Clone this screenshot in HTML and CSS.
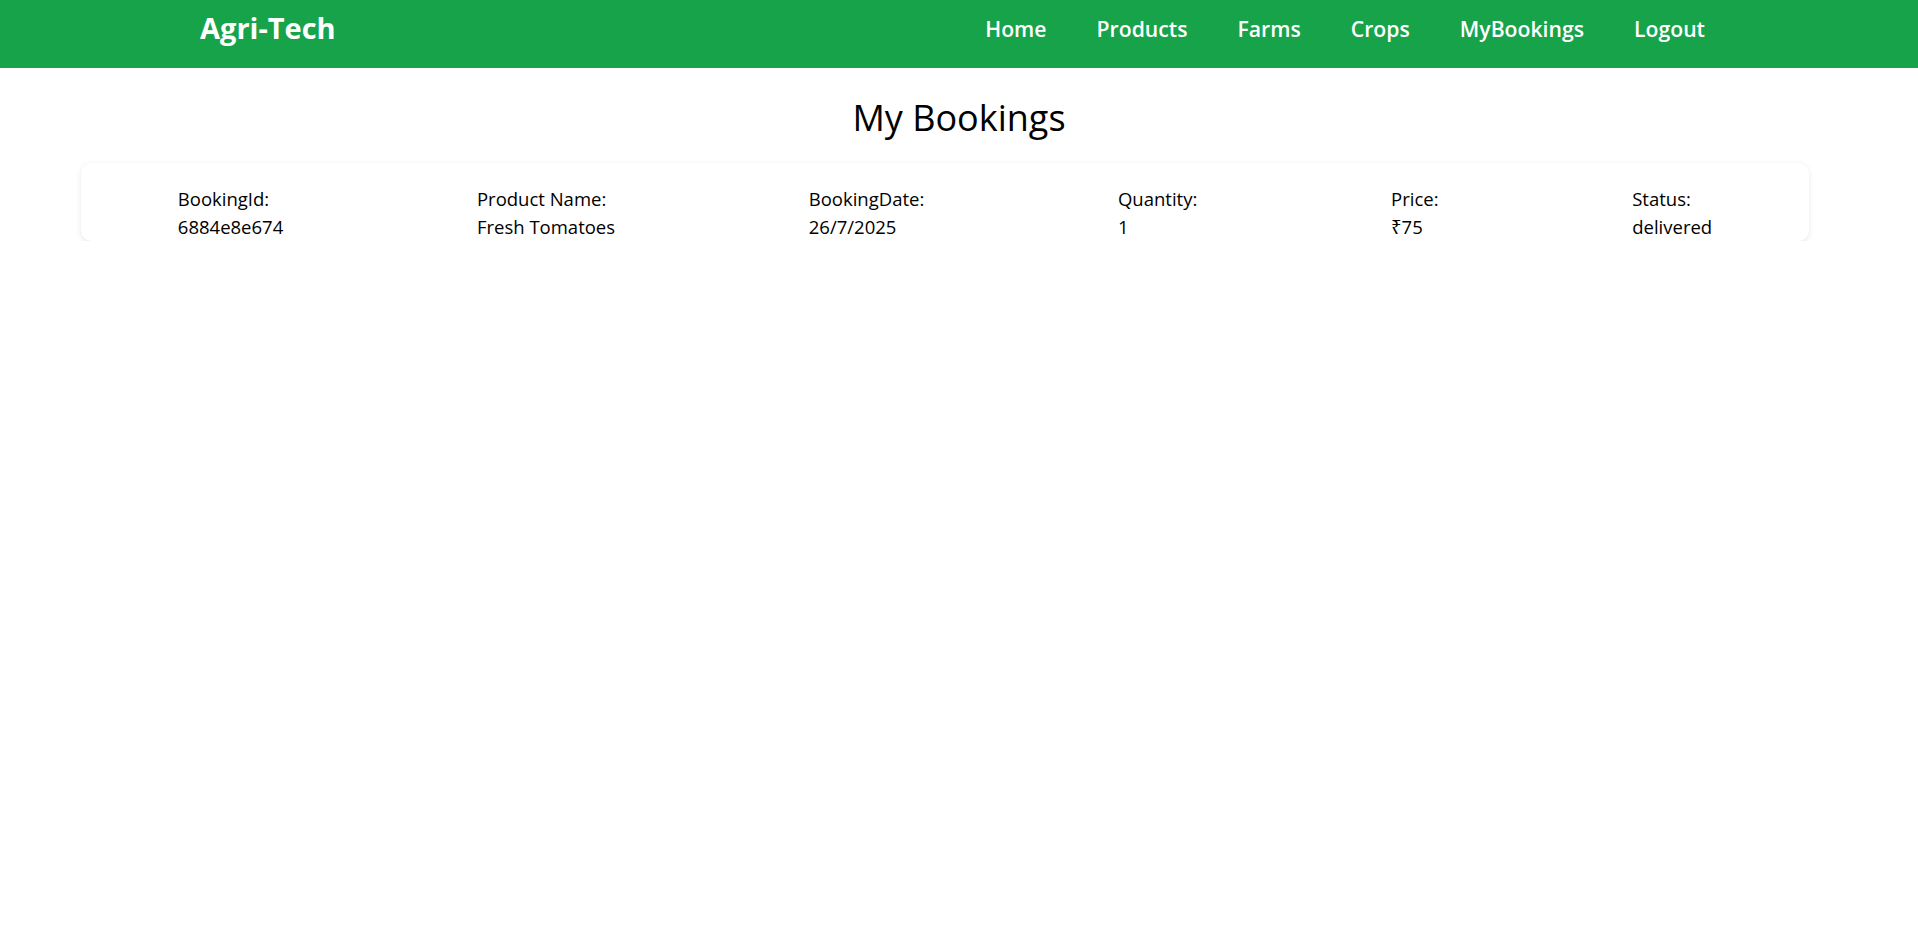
FILE: index.html
```html
<!DOCTYPE html>
<html lang="en">
<head>
<meta charset="utf-8">
<title>Agri-Tech - My Bookings</title>
<link rel="stylesheet" href="styles.css">
</head>
<body>
<header class="navbar">
  <div class="brand">Agri-Tech</div>
  <nav class="nav-links">
    <a href="#" class="nav-link">Home</a>
    <a href="#" class="nav-link">Products</a>
    <a href="#" class="nav-link">Farms</a>
    <a href="#" class="nav-link">Crops</a>
    <a href="#" class="nav-link">MyBookings</a>
    <a href="#" class="nav-link">Logout</a>
  </nav>
</header>
<main class="content">
  <h1 class="page-title">My Bookings</h1>
  <section class="booking-card">
    <div class="field">
      <div class="label">BookingId:</div>
      <div class="value">6884e8e674</div>
    </div>
    <div class="field">
      <div class="label">Product Name:</div>
      <div class="value">Fresh Tomatoes</div>
    </div>
    <div class="field">
      <div class="label">BookingDate:</div>
      <div class="value">26/7/2025</div>
    </div>
    <div class="field">
      <div class="label">Quantity:</div>
      <div class="value">1</div>
    </div>
    <div class="field">
      <div class="label">Price:</div>
      <div class="value">₹75</div>
    </div>
    <div class="field">
      <div class="label">Status:</div>
      <div class="value">delivered</div>
    </div>
  </section>
</main>
</body>
</html>
```
FILE: styles.css
```css
* { box-sizing: border-box; }
html, body {
  margin: 0;
  padding: 0;
  background: #ffffff;
  font-family: "Open Sans", "Noto Sans", "Liberation Sans", sans-serif;
  color: #000000;
}
.navbar {
  height: 68px;
  background: #16a34a;
  display: flex;
  justify-content: space-between;
  align-items: flex-start;
  padding: 0 213px 0 200px;
}
.brand {
  color: #ffffff;
  font-weight: 700;
  font-size: 29px;
  line-height: 36px;
  margin-top: 10px;
}
.nav-links {
  display: flex;
  gap: 50px;
  margin-top: 15px;
}
.nav-link {
  color: #ffffff;
  text-decoration: none;
  font-weight: 600;
  font-size: 21.2px;
  line-height: 28px;
}
.content {
  padding-top: 30px;
}
.page-title {
  margin: 0;
  text-align: center;
  font-weight: 400;
  font-size: 36px;
  line-height: 40px;
}
.booking-card {
  margin: 25px 0 0 81px;
  width: 1728px;
  display: flex;
  justify-content: space-around;
  padding: 22px 0 0 0;
  border-radius: 10px;
  background: #ffffff;
  box-shadow: 0 2px 6px rgba(0, 0, 0, 0.08), 0 0 2px rgba(0, 0, 0, 0.04);
}
.field {
  font-size: 18.5px;
  line-height: 28px;
}
.label, .value { white-space: nowrap; }
```
